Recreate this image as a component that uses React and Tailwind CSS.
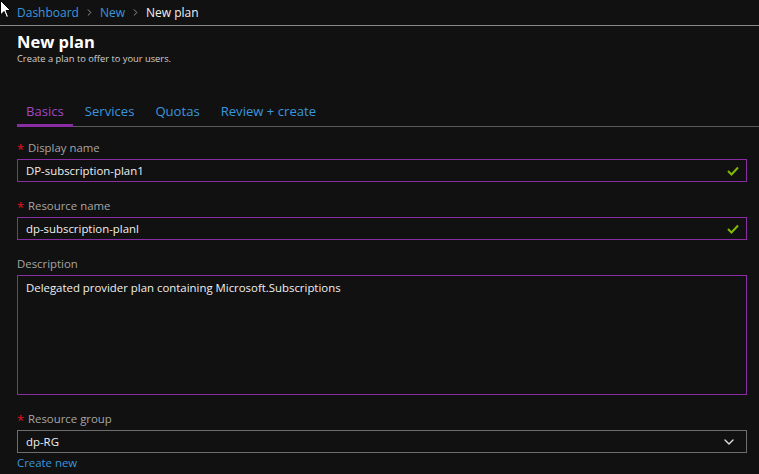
import { ChevronRight, ChevronDown } from "lucide-react";

const font = { fontFamily: '"Open Sans", "Noto Sans", sans-serif' };

function Check() {
    return (
        <svg width="12" height="10" viewBox="0 0 12 10" className="shrink-0">
            <path d="M1 5 L4.5 8.5 L11 1.5" fill="none" stroke="#7fba00" strokeWidth="2" />
        </svg>
    );
}

function Label({ children, required }) {
    return (
        <div className="flex items-center h-[16px] text-[11.4px] text-[#a6a6a6]">
            {required && <span className="text-[#e81123] w-[11px] text-[13px] leading-none pt-[2px]">*</span>}
            <span>{children}</span>
        </div>
    );
}

function TextInput({ value }) {
    return (
        <div className="flex items-center h-[23px] w-[730px] border border-[#8a2da5] pl-[8px] pr-[7px] mt-[3px]">
            <span className="flex-1 text-[11.4px] text-[#f0f0f0]">{value}</span>
            <Check />
        </div>
    );
}

export default function App() {
    const tabs = ["Basics", "Services", "Quotas", "Review + create"];

    return (
        <div className="relative w-[759px] h-[474px] bg-[#111111] overflow-hidden" style={font}>
            <svg className="absolute left-0 top-0" width="11" height="20" viewBox="0 0 11 20">
                <path d="M0.5 0.5 L0.5 15 L4 11.5 L6.5 17.5 L8.5 16.5 L6 10.5 L10.5 10.5 Z" fill="#ffffff" stroke="#000" strokeWidth="1" />
            </svg>

            <div className="flex items-center h-[26px] pl-[17px] text-[12px] border-b border-[#8a8a8a]">
                <span className="text-[#3a96dd]">Dashboard</span>
                <ChevronRight size={11} className="mx-[5px] text-[#9a9a9a]" />
                <span className="text-[#3a96dd]">New</span>
                <ChevronRight size={11} className="mx-[5px] text-[#9a9a9a]" />
                <span className="text-[#f0f0f0]">New plan</span>
            </div>

            <div className="pl-[17px] pt-[5px]">
                <div className="text-[16.5px] font-bold text-white leading-[22px]">New plan</div>
                <div className="text-[9.3px] text-[#d0d0d0] leading-[12px]">Create a plan to offer to your users.</div>
            </div>

            <div className="flex ml-[17px] mt-[37px] border-b border-[#5a5a5a] h-[25px]">
                {tabs.map((t, i) => (
                    <div
                        key={t}
                        className={`px-[9px] mr-[3px] text-[13.1px] leading-[18px] ${i === 0 ? "text-[#a347c4] border-b-[3px] border-[#8a2da5] -mb-[1px]" : "text-[#3a96dd]"}`}
                    >
                        {t}
                    </div>
                ))}
            </div>

            <div className="pl-[17px] pt-[13px]">
                <Label required>Display name</Label>
                <TextInput value="DP-subscription-plan1" />

                <div className="mt-[16px]">
                    <Label required>Resource name</Label>
                    <TextInput value="dp-subscription-planl" />
                </div>

                <div className="mt-[16px]">
                    <Label>Description</Label>
                    <div className="h-[120px] w-[730px] border border-[#8a2da5] pl-[8px] pt-[3px] mt-[3px] text-[11.4px] text-[#f0f0f0]">
                        Delegated provider plan containing Microsoft.Subscriptions
                    </div>
                </div>

                <div className="mt-[16px]">
                    <Label required>Resource group</Label>
                    <div className="flex items-center h-[23px] w-[730px] border border-[#6e6e6e] pl-[8px] pr-[9px] mt-[3px]">
                        <span className="flex-1 text-[11.4px] text-[#f0f0f0]">dp-RG</span>
                        <ChevronDown size={16} className="text-[#e0e0e0]" />
                    </div>
                    <div className="text-[11.4px] text-[#3a96dd] leading-[18px] mt-[1px]">Create new</div>
                </div>
            </div>
        </div>
    );
}
